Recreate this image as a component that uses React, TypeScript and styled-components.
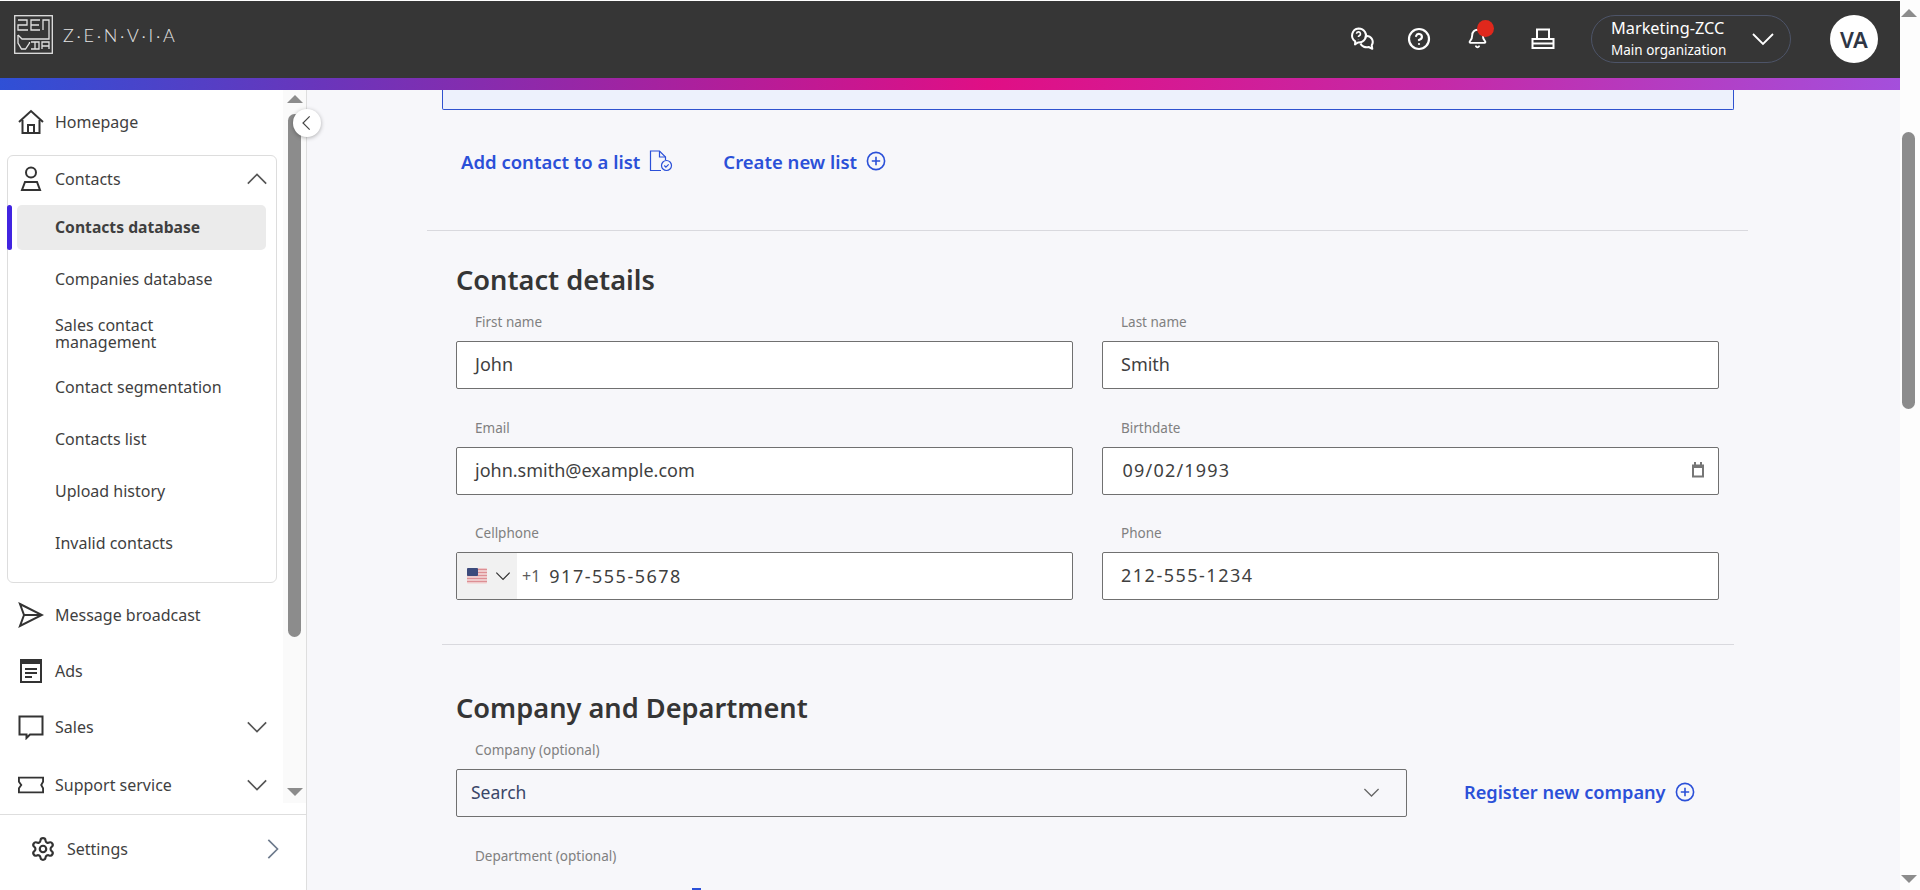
import React from 'react';
import styled, { createGlobalStyle } from 'styled-components';
import { CircleHelp, Bell, Settings } from 'lucide-react';

const GlobalStyle = createGlobalStyle`
  html, body {
    margin: 0;
    padding: 0;
    height: 100%;
    overflow: hidden;
    background: #fff;
    font-family: "Noto Sans", "Open Sans", sans-serif;
  }
  * { box-sizing: border-box; }
`;

const Chevron = ({ dir = 'down', size = 22, color = '#555' }: { dir?: 'down' | 'up' | 'left' | 'right'; size?: number; color?: string }) => {
  const d = { down: 'M2 7l10 10 10-10', up: 'M2 17L12 7l10 10', left: 'M16 2L6 12l10 10', right: 'M8 2l10 10L8 22' }[dir];
  return (
    <svg width={size} height={size} viewBox="0 0 24 24" fill="none" stroke={color} strokeWidth="1.8">
      <path d={d} />
    </svg>
  );
};

const Logo = () => (
  <svg width="39" height="39" viewBox="0 0 39 39" fill="none" stroke="#e2e2e2" strokeWidth="1.3">
    <rect x="0.7" y="0.7" width="37.6" height="37.6" />
    <path d="M4 5h9v5H4v5h10" />
    <path d="M26 5h-9v10h9M17 10h8" />
    <path d="M29 15V5h6v19H8l-4-4" />
    <path d="M4 20v8l3.5 6h4l4-6v-1" />
    <path d="M17 27h8v7h-8M21 27v7" />
    <path d="M28 34v-7h7v7M28 31h7" />
  </svg>
);

const ChatIcon = () => (
  <svg width="26" height="26" viewBox="0 0 26 26" fill="none" stroke="#fff" strokeWidth="2" strokeLinejoin="round">
    <path d="M9.5 2.5a7.5 7 0 0 1 6.5 10.5 7.5 7 0 0 1-7 3.5l-3 2 .3-3.2A7.2 7 0 0 1 9.5 2.5z" />
    <path d="M16.7 10a6 6 0 0 1 6 9.2l.6 3.6-3.6-1.8a6.5 6 0 0 1-8.2-3.5" />
    <path d="M7.5 7.7a2 2 0 1 1 2.8 2c-.6.3-.9.7-.9 1.4M9.4 13v.3" strokeWidth="1.6" />
  </svg>
);

const TrayIcon = () => (
  <svg width="24" height="24" viewBox="0 0 24 24" fill="none" stroke="#fff" strokeWidth="2">
    <path d="M6 12V2.5h12V12" />
    <rect x="1.5" y="12" width="21" height="9" />
    <path d="M1.5 16.5h21" />
  </svg>
);

const HomeIcon = () => (
  <svg width="26" height="26" viewBox="0 0 26 26" fill="none" stroke="#333" strokeWidth="2">
    <path d="M1 13L13 2l12 11" />
    <path d="M4.5 11v13h17V11" />
    <path d="M10 24v-8h6v8" />
  </svg>
);

const PersonIcon = () => (
  <svg width="26" height="26" viewBox="0 0 26 26" fill="none" stroke="#333" strokeWidth="2">
    <circle cx="13" cy="6.5" r="5" />
    <path d="M7 16h12l3 8H4z" />
  </svg>
);

const SendIcon = () => (
  <svg width="26" height="26" viewBox="0 0 26 26" fill="none" stroke="#333" strokeWidth="2" strokeLinejoin="miter">
    <path d="M2 2l22 11L2 24l4-11z" />
    <path d="M6 13h18" />
  </svg>
);

const NewsIcon = () => (
  <svg width="26" height="26" viewBox="0 0 26 26" fill="none" stroke="#333" strokeWidth="2">
    <rect x="3" y="2" width="20" height="22" />
    <path d="M3 4h20" strokeWidth="4" />
    <path d="M7 11h12M7 15h12M7 19h7" />
  </svg>
);

const BubbleIcon = () => (
  <svg width="26" height="26" viewBox="0 0 26 26" fill="none" stroke="#333" strokeWidth="2">
    <path d="M1.5 2.5h23v18H12l-3.5 3.5v-3.5h-7z" />
  </svg>
);

const TicketIcon = () => (
  <svg width="28" height="18" viewBox="0 0 28 18" fill="none" stroke="#333" strokeWidth="2">
    <path d="M1 1h26v4.5l-2 3.5 2 3.5V17H1v-4.5L3.5 9 1 5.5z" />
  </svg>
);

const FileCheckIcon = () => (
  <svg width="24" height="22" viewBox="0 0 24 22" fill="none" stroke="#2b50d8" strokeWidth="1.2">
    <path d="M12 20.5H1.5V1h9l6 6v3" />
    <path d="M10.5 1v6h6" />
    <circle cx="17.5" cy="15.5" r="5" />
    <path d="M15.3 15.5l1.6 1.6 2.8-2.8" />
  </svg>
);

const PlusCircleIcon = () => (
  <svg width="20" height="20" viewBox="0 0 20 20" fill="none" stroke="#2b50d8" strokeWidth="1.6">
    <circle cx="10" cy="10" r="8.6" />
    <path d="M10 5.8v8.4M5.8 10h8.4" />
  </svg>
);

const CalendarIcon = () => (
  <svg width="14" height="16" viewBox="0 0 14 16" fill="none" stroke="#767676" strokeWidth="2">
    <rect x="2" y="3.5" width="10" height="11" />
    <path d="M1 4.5h12" strokeWidth="3" />
    <path d="M4 0v3M10 0v3" />
  </svg>
);

const UsFlag = () => (
  <svg width="20" height="16" viewBox="0 0 20 16">
    <rect width="20" height="16" rx="1.5" fill="#f3dede" />
    <path d="M0 1.5h20M0 4.5h20M0 7.5h20M0 10.5h20M0 13.5h20" stroke="#dd8f94" strokeWidth="1.4" />
    <rect width="11" height="8" rx="1" fill="#3c4b7c" />
  </svg>
);

export default function App() {
  return (
    <>
      <GlobalStyle />
      <Page>
        <Frame>
          <Header>
            <Brand>
              <Logo />
              <BrandName>Z·E·N·V·I·A</BrandName>
            </Brand>
            <HeaderTools>
              <ToolButton $w={26}><ChatIcon /></ToolButton>
              <ToolButton $w={24} $ml={32}><CircleHelp size={24} color="#fff" strokeWidth={2.2} /></ToolButton>
              <ToolButton $w={24} $ml={34}>
                <Bell size={21} color="#fff" strokeWidth={2.2} />
                <Dot />
              </ToolButton>
              <ToolButton $w={24} $ml={42}><TrayIcon /></ToolButton>
              <OrgPill>
                <OrgText>
                  <OrgName>Marketing-ZCC</OrgName>
                  <OrgSub>Main organization</OrgSub>
                </OrgText>
                <Chevron size={24} color="#fff" />
              </OrgPill>
              <Avatar>VA</Avatar>
            </HeaderTools>
          </Header>
          <GradientBar />
          <Body>
            <Sidebar>
              <NavArea>
                <NavList>
                  <NavRow>
                    <NavIcon><HomeIcon /></NavIcon>
                    <NavLabel>Homepage</NavLabel>
                  </NavRow>
                  <NavGroup>
                    <GroupHead>
                      <NavIcon><PersonIcon /></NavIcon>
                      <NavLabel>Contacts</NavLabel>
                      <Chevron dir="up" />
                    </GroupHead>
                    <SubItem $active>Contacts database</SubItem>
                    <SubItem>Companies database</SubItem>
                    <SubItem $tall>Sales contact<br />management</SubItem>
                    <SubItem>Contact segmentation</SubItem>
                    <SubItem>Contacts list</SubItem>
                    <SubItem>Upload history</SubItem>
                    <SubItem>Invalid contacts</SubItem>
                  </NavGroup>
                  <NavRow $mt={10}>
                    <NavIcon><SendIcon /></NavIcon>
                    <NavLabel>Message broadcast</NavLabel>
                  </NavRow>
                  <NavRow $mt={12}>
                    <NavIcon><NewsIcon /></NavIcon>
                    <NavLabel>Ads</NavLabel>
                  </NavRow>
                  <NavRow $mt={12}>
                    <NavIcon><BubbleIcon /></NavIcon>
                    <NavLabel>Sales</NavLabel>
                    <Chevron />
                  </NavRow>
                  <NavRow $mt={14}>
                    <NavIcon><TicketIcon /></NavIcon>
                    <NavLabel>Support service</NavLabel>
                    <Chevron />
                  </NavRow>
                </NavList>
                <SideScroll>
                  <ArrowUp />
                  <SideThumb />
                  <ArrowDown />
                </SideScroll>
              </NavArea>
              <SideFooter>
                <Settings size={26} color="#333" strokeWidth={2} />
                <FooterLabel>Settings</FooterLabel>
                <Chevron dir="right" size={22} color="#6d7a8c" />
              </SideFooter>
              <CollapseButton><Chevron dir="left" size={16} color="#444" /></CollapseButton>
            </Sidebar>
            <Main>
              <Notice />
              <LinkRow>
                <ActionLink>Add contact to a list <FileCheckIcon /></ActionLink>
                <ActionLink>Create new list <PlusCircleIcon /></ActionLink>
              </LinkRow>
              <WideDivider />
              <Section>
                <SectionTitle>Contact details</SectionTitle>
                <FieldGrid>
                  <Field>
                    <FieldLabel>First name</FieldLabel>
                    <InputBox>John</InputBox>
                  </Field>
                  <Field>
                    <FieldLabel>Last name</FieldLabel>
                    <InputBox>Smith</InputBox>
                  </Field>
                  <Field>
                    <FieldLabel>Email</FieldLabel>
                    <InputBox>john.smith@example.com</InputBox>
                  </Field>
                  <Field>
                    <FieldLabel>Birthdate</FieldLabel>
                    <InputBox>
                      <DateValue>09/02/1993</DateValue>
                      <CalendarIcon />
                    </InputBox>
                  </Field>
                  <Field>
                    <FieldLabel>Cellphone</FieldLabel>
                    <PhoneBox>
                      <FlagPicker>
                        <UsFlag />
                        <Chevron size={16} color="#333" />
                      </FlagPicker>
                      <DialCode>+1</DialCode>
                      <PhoneNumber>917-555-5678</PhoneNumber>
                    </PhoneBox>
                  </Field>
                  <Field>
                    <FieldLabel>Phone</FieldLabel>
                    <InputBox><PhoneNumber>212-555-1234</PhoneNumber></InputBox>
                  </Field>
                </FieldGrid>
              </Section>
              <NarrowDivider />
              <Section $mt={45}>
                <SectionTitle>Company and Department</SectionTitle>
                <CompanyRow>
                  <Field>
                    <FieldLabel>Company (optional)</FieldLabel>
                    <SelectBox>
                      <SelectText>Search</SelectText>
                      <Chevron size={17} color="#666" />
                    </SelectBox>
                  </Field>
                  <RegisterLink>Register new company <PlusCircleIcon /></RegisterLink>
                </CompanyRow>
                <DepartmentLabel>Department (optional)</DepartmentLabel>
                <CutMark />
              </Section>
            </Main>
          </Body>
        </Frame>
        <PageScroll>
          <ArrowUp />
          <PageThumb />
          <ArrowDown />
        </PageScroll>
      </Page>
    </>
  );
}

const Page = styled.div`
  display: flex;
  width: 100%;
  height: 100vh;
  overflow: hidden;
  color: #3a3a3a;
`;

const Frame = styled.div`
  flex: 1;
  min-width: 0;
  display: flex;
  flex-direction: column;
`;

const Header = styled.header`
  height: 77px;
  margin-top: 1px;
  flex: none;
  background: #363636;
  display: flex;
  align-items: center;
  justify-content: space-between;
  padding: 0 22px 0 14px;
`;

const Brand = styled.div`
  display: flex;
  align-items: center;
  gap: 10px;
  margin-top: -10px;
`;

const BrandName = styled.span`
  font-family: "Lato", sans-serif;
  font-weight: 300;
  font-size: 18px;
  letter-spacing: 2.7px;
  color: #e4e4e4;
`;

const HeaderTools = styled.div`
  display: flex;
  align-items: center;
  margin-top: -2px;
`;

const ToolButton = styled.div<{ $w: number; $ml?: number }>`
  position: relative;
  width: ${(p) => p.$w}px;
  margin-left: ${(p) => p.$ml ?? 0}px;
  display: flex;
  justify-content: center;
`;

const Dot = styled.span`
  position: absolute;
  top: -8px;
  left: 12px;
  width: 17px;
  height: 17px;
  border-radius: 50%;
  background: #e0281c;
`;

const OrgPill = styled.div`
  width: 200px;
  height: 48px;
  margin-left: 36px;
  border: 1px solid #4d5468;
  border-radius: 24px;
  display: flex;
  align-items: center;
  justify-content: space-between;
  padding: 0 15px 0 19px;
`;

const OrgText = styled.div`
  display: flex;
  flex-direction: column;
  gap: 1px;
  color: #fff;
`;

const OrgName = styled.span`
  font-size: 16.3px;
  line-height: 22px;
`;

const OrgSub = styled.span`
  font-size: 13.5px;
  line-height: 20px;
`;

const Avatar = styled.div`
  width: 48px;
  height: 48px;
  margin-left: 39px;
  border-radius: 50%;
  background: #fff;
  color: #2f3645;
  font-size: 22px;
  font-weight: 600;
  display: flex;
  align-items: center;
  justify-content: center;
`;

const GradientBar = styled.div`
  height: 12px;
  flex: none;
  background: linear-gradient(90deg, #2f50d6 0%, #6a35bb 17%, #e00f85 52%, #c42aa8 76%, #a44fdc 100%);
`;

const Body = styled.div`
  flex: 1;
  min-height: 0;
  display: flex;
`;

const Sidebar = styled.aside`
  position: relative;
  width: 307px;
  flex: none;
  background: #fff;
  border-right: 1px solid #dedede;
  display: flex;
  flex-direction: column;
`;

const NavArea = styled.div`
  height: 724px;
  flex: none;
  display: flex;
  overflow: hidden;
`;

const NavList = styled.nav`
  width: 283px;
  flex: none;
  padding-top: 10px;
`;

const NavRow = styled.div<{ $mt?: number }>`
  height: 44px;
  margin-top: ${(p) => p.$mt ?? 0}px;
  display: flex;
  align-items: center;
  gap: 11px;
  padding: 0 15px 0 18px;
`;

const NavIcon = styled.span`
  width: 26px;
  flex: none;
  display: flex;
  justify-content: center;
`;

const NavLabel = styled.span`
  flex: 1;
  font-size: 16px;
  color: #3f3f3f;
`;

const NavGroup = styled.div`
  width: 270px;
  height: 428px;
  margin: 11px 0 0 7px;
  border: 1px solid #dddddd;
  border-radius: 6px;
  padding: 0 10px 0 9px;
  display: flex;
  flex-direction: column;
  gap: 7px;
`;

const GroupHead = styled(NavRow)`
  height: 45px;
  margin: 0 -2px -3px 0;
  padding: 0 0 0 1px;
`;

const SubItem = styled.div<{ $active?: boolean; $tall?: boolean }>`
  position: relative;
  height: ${(p) => (p.$tall ? 49 : 45)}px;
  flex: none;
  display: flex;
  align-items: center;
  padding-left: 38px;
  border-radius: 5px;
  font-size: ${(p) => (p.$active ? 15.7 : 16)}px;
  line-height: 17px;
  color: #3f3f3f;
  background: ${(p) => (p.$active ? '#ebebeb' : 'transparent')};
  font-weight: ${(p) => (p.$active ? 700 : 400)};
  &::before {
    content: '';
    display: ${(p) => (p.$active ? 'block' : 'none')};
    position: absolute;
    left: -10px;
    top: 0;
    width: 5px;
    height: 100%;
    border-radius: 3px;
    background: #4124e0;
  }
`;

const SideScroll = styled.div`
  width: 23px;
  height: 713px;
  flex: none;
  background: #fafafa;
  display: flex;
  flex-direction: column;
  align-items: center;
  justify-content: space-between;
  padding: 5px 0 7px;
`;

const ArrowUp = styled.span`
  width: 0;
  height: 0;
  flex: none;
  border-left: 8px solid transparent;
  border-right: 8px solid transparent;
  border-bottom: 8px solid #8c8c8c;
`;

const ArrowDown = styled.span`
  width: 0;
  height: 0;
  flex: none;
  border-left: 8px solid transparent;
  border-right: 8px solid transparent;
  border-top: 8px solid #8c8c8c;
`;

const SideThumb = styled.div`
  width: 13px;
  height: 523px;
  margin: 11px 0 auto;
  border-radius: 7px;
  background: #8c8c8c;
`;

const SideFooter = styled.div`
  flex: 1;
  border-top: 1px solid #dedede;
  display: flex;
  align-items: center;
  gap: 11px;
  padding: 0 23px 7px 30px;
`;

const FooterLabel = styled.span`
  flex: 1;
  font-size: 16px;
  color: #3f3f3f;
`;

const CollapseButton = styled.div`
  position: absolute;
  top: 19px;
  right: -15px;
  width: 28px;
  height: 28px;
  z-index: 2;
  border-radius: 50%;
  background: #fff;
  box-shadow: 0 1px 4px rgba(0, 0, 0, 0.3);
  display: flex;
  align-items: center;
  justify-content: center;
`;

const Main = styled.main`
  flex: 1;
  min-width: 0;
  background: #f7f7fa;
  overflow: hidden;
`;

const Notice = styled.div`
  width: 1292px;
  height: 20px;
  margin-left: 135px;
  background: #edf1fc;
  border: 1px solid #2f52cf;
  border-top: none;
  border-radius: 0 0 2px 2px;
`;

const LinkRow = styled.div`
  display: flex;
  align-items: center;
  gap: 50px;
  height: 40px;
  margin: 31px 0 0 154px;
`;

const ActionLink = styled.a`
  display: flex;
  align-items: center;
  gap: 9px;
  font-size: 18.5px;
  font-weight: 600;
  color: #2b50d8;
`;

const WideDivider = styled.div`
  width: 1321px;
  height: 1px;
  margin: 49px 0 0 120px;
  background: #d9d9de;
`;

const NarrowDivider = styled.div`
  width: 1292px;
  height: 1px;
  margin: 44px 0 0 135px;
  background: #d9d9de;
`;

const Section = styled.section<{ $mt?: number }>`
  margin: ${(p) => p.$mt ?? 31}px 0 0 149px;
`;

const SectionTitle = styled.h2`
  margin: 0;
  font-size: 27.2px;
  line-height: 36px;
  font-weight: 600;
  color: #353535;
`;

const FieldGrid = styled.div`
  display: grid;
  grid-template-columns: 617px 617px;
  column-gap: 29px;
  row-gap: 29.5px;
  margin-top: 15px;
`;

const Field = styled.div`
  display: flex;
  flex-direction: column;
  gap: 10px;
`;

const FieldLabel = styled.label`
  padding-left: 19px;
  font-size: 13.5px;
  line-height: 18px;
  color: #808080;
`;

const InputBox = styled.div`
  height: 48px;
  background: #fff;
  border: 1px solid #707070;
  border-radius: 2px;
  display: flex;
  align-items: center;
  justify-content: space-between;
  padding: 0 13px 2px 18px;
  font-size: 18px;
  color: #3f3f3f;
`;

const DateValue = styled.span`
  margin-left: 1.5px;
  letter-spacing: 1.2px;
`;

const PhoneBox = styled(InputBox)`
  justify-content: flex-start;
  padding: 0;
  overflow: hidden;
`;

const FlagPicker = styled.div`
  width: 60px;
  height: 100%;
  background: #f1f1f1;
  display: flex;
  align-items: center;
  gap: 8px;
  padding-left: 10px;
`;

const DialCode = styled.span`
  margin: 0 9px 0 5px;
  font-size: 16px;
  color: #5c5c5c;
`;

const PhoneNumber = styled.span`
  letter-spacing: 1.5px;
`;

const CompanyRow = styled.div`
  display: grid;
  grid-template-columns: 951px auto;
  column-gap: 57px;
  align-items: end;
  margin-top: 15px;
`;

const SelectBox = styled.div`
  height: 48px;
  border: 1px solid #707070;
  border-radius: 2px;
  display: flex;
  align-items: center;
  justify-content: space-between;
  padding: 0 26px 2px 14px;
`;

const SelectText = styled.span`
  font-size: 17.5px;
  color: #3a4668;
`;

const RegisterLink = styled(ActionLink)`
  height: 50px;
  font-size: 18.2px;
  gap: 9px;
`;

const DepartmentLabel = styled(FieldLabel)`
  display: block;
  margin-top: 30px;
`;

const CutMark = styled.div`
  width: 9px;
  height: 4px;
  margin: 23px 0 0 236px;
  background: #2b50d8;
`;

const PageScroll = styled.div`
  width: 20px;
  flex: none;
  background: #fdfdfd;
  display: flex;
  flex-direction: column;
  align-items: center;
  padding: 9px 3px 7px 0;
`;

const PageThumb = styled.div`
  width: 13px;
  height: 277px;
  margin: 115px 0 auto;
  border-radius: 7px;
  background: #8c8c8c;
`;
